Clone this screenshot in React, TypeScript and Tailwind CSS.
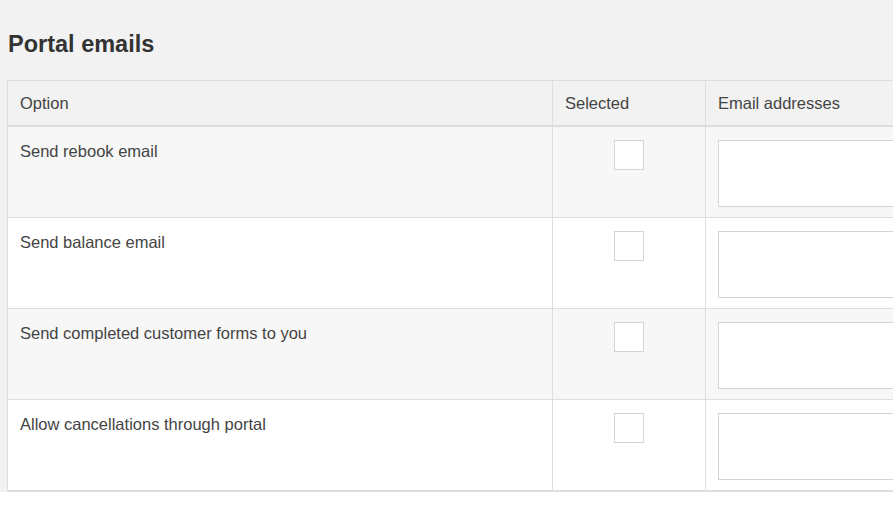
const options = [
  "Send rebook email",
  "Send balance email",
  "Send completed customer forms to you",
  "Allow cancellations through portal",
];

export default function App() {
  return (
    <div className="min-h-[508px] w-[896px] bg-white font-['Liberation_Sans',Arial,sans-serif] text-[#333]">
      <div className="w-[893px] overflow-hidden bg-[#f2f2f2] pt-[30px]">
        <h2 className="pl-2 text-[23.5px] font-bold leading-[28px] text-[#333]">
          Portal emails
        </h2>
        <div className="ml-[7px] mt-[22px] w-[1000px] border border-[#dedede]">
          <div className="grid h-[46px] grid-cols-[544px_153px_1fr] border-b-2 border-[#dedede] bg-[#f2f2f2] text-[16.5px] text-[#444]">
            <div className="flex items-center px-3">Option</div>
            <div className="flex items-center border-l border-[#dedede] px-3">
              Selected
            </div>
            <div className="flex items-center border-l border-[#dedede] px-3">
              Email addresses
            </div>
          </div>
          {options.map((label, i) => (
            <div
              key={label}
              className={`grid h-[91px] grid-cols-[544px_153px_1fr] border-b border-[#dedede] ${
                i % 2 === 0 ? "bg-[#f7f7f7]" : "bg-white"
              }`}
            >
              <div className="px-3 pt-[13px] text-[16.5px] leading-[22px] text-[#444]">
                {label}
              </div>
              <div className="flex justify-center border-l border-[#dedede] pt-[13px]">
                <span className="block h-[30px] w-[30px] border border-[#d4d4d4] bg-white" />
              </div>
              <div className="border-l border-[#dedede] px-3 pt-[13px]">
                <div className="h-[67px] w-full border border-[#d4d4d4] bg-white" />
              </div>
            </div>
          ))}
        </div>
      </div>
    </div>
  );
}
